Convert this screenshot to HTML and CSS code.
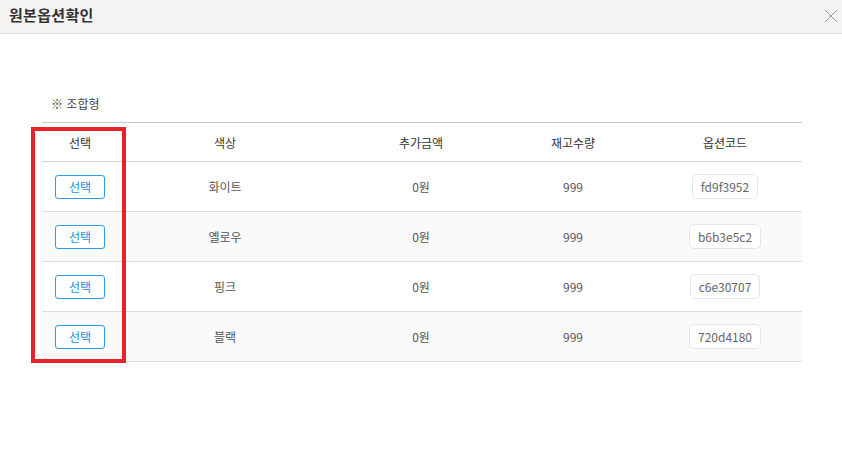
FILE: index.html
```html
<!DOCTYPE html>
<html lang="ko">
<head>
    <meta charset="UTF-8">
    <meta name="viewport" content="width=device-width, initial-scale=1.0">
    <title>원본옵션확인</title>
    <link rel="stylesheet" href="styles.css">
</head>
<body>
    <div class="modal">
        <div class="modal-header">
            <h2>원본옵션확인</h2>
            <button type="button" class="close-btn" aria-label="닫기">
                <svg width="14" height="14" viewBox="0 0 14 14"><path d="M1 1L13 13M13 1L1 13" stroke="#999" stroke-width="1" fill="none"/></svg>
            </button>
        </div>
        <div class="modal-body">
            <p class="type-label">※ 조합형</p>
            <div class="table-wrap">
                <table class="option-table">
                    <thead>
                        <tr>
                            <th class="col-select">선택</th>
                            <th class="col-color">색상</th>
                            <th class="col-price">추가금액</th>
                            <th class="col-stock">재고수량</th>
                            <th class="col-code">옵션코드</th>
                        </tr>
                    </thead>
                    <tbody>
                        <tr>
                            <td><button type="button" class="select-btn">선택</button></td>
                            <td>화이트</td>
                            <td>0원</td>
                            <td>999</td>
                            <td class="col-code"><span class="code">fd9f3952</span></td>
                        </tr>
                        <tr>
                            <td><button type="button" class="select-btn">선택</button></td>
                            <td>옐로우</td>
                            <td>0원</td>
                            <td>999</td>
                            <td class="col-code"><span class="code">b6b3e5c2</span></td>
                        </tr>
                        <tr>
                            <td><button type="button" class="select-btn">선택</button></td>
                            <td>핑크</td>
                            <td>0원</td>
                            <td>999</td>
                            <td class="col-code"><span class="code">c6e30707</span></td>
                        </tr>
                        <tr>
                            <td><button type="button" class="select-btn">선택</button></td>
                            <td>블랙</td>
                            <td>0원</td>
                            <td>999</td>
                            <td class="col-code"><span class="code">720d4180</span></td>
                        </tr>
                    </tbody>
                </table>
                <div class="highlight"></div>
            </div>
        </div>
    </div>
</body>
</html>
```

FILE: styles.css
```css
body { margin: 0; background-color: #fff; font-family: "Noto Sans CJK KR", "Noto Sans", sans-serif; color: #555; }
.modal { width: 842px; height: 452px; }
.modal-header {
    height: 33px;
    background-color: #f4f4f4;
    border-bottom: 1px solid #dedede;
    display: flex;
    align-items: center;
    justify-content: space-between;
    padding: 0 0 0 9px;
}
.modal-header h2 { margin: 0; font-size: 15px; font-weight: bold; color: #333; letter-spacing: 0.3px; position: relative; top: -2px; }
.close-btn { background: none; border: none; padding: 4px; cursor: pointer; display: flex; position: relative; top: -1px; }
.modal-body { padding: 61px 40px 0 42px; }
.type-label { margin: 0 0 9px 9px; font-size: 12px; color: #444; line-height: 18px; }
.table-wrap { position: relative; width: 760px; }
.option-table { width: 760px; border-collapse: collapse; table-layout: fixed; font-size: 12px; }
.option-table th { height: 38px; font-weight: normal; color: #333; border-top: 1px solid #c8c8c8; border-bottom: 1px solid #d4d4d4; text-align: center; padding: 0; }
.option-table td { height: 49px; text-align: center; border-bottom: 1px solid #dcdcdc; padding: 0; color: #555; }
.option-table tbody tr:nth-child(even) td { background-color: #fafafa; }
.col-select { width: 76px; }
.col-color { width: 214px; }
.col-price { width: 178px; }
.col-stock { width: 126px; }
.option-table .col-code { padding-left: 12px; }
.select-btn {
    font-family: inherit;
    font-size: 12px;
    color: #1a8fe6;
    background-color: #fff;
    border: 1px solid #2a9df0;
    border-radius: 3px;
    width: 50px;
    height: 24px;
    padding: 0;
    cursor: pointer;
}
.code {
    display: inline-block;
    border: 1px solid #e6e6e6;
    border-radius: 5px;
    background-color: #fff;
    padding: 0 8px;
    line-height: 23px;
    color: #666;
}
.highlight {
    position: absolute;
    left: -11px;
    top: 5px;
    width: 87px;
    height: 228px;
    border: 4px solid #e8222a;
    pointer-events: none;
}
```
